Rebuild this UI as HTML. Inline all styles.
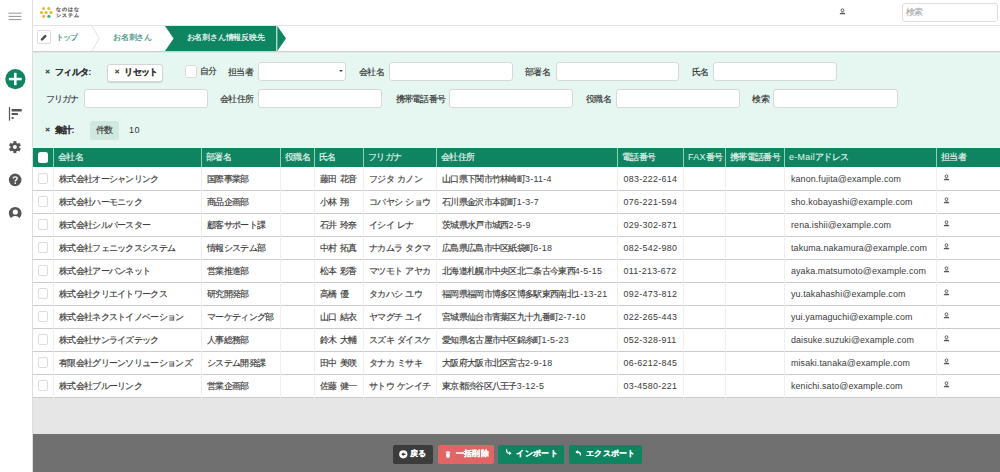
<!DOCTYPE html>
<html><head><meta charset="utf-8">
<style>
*{box-sizing:border-box;margin:0;padding:0}
html,body{width:1000px;height:472px;overflow:hidden;background:#fff;font-family:"Liberation Sans",sans-serif;color:#333;font-size:9px;-webkit-text-stroke:0.15px currentColor;letter-spacing:-.7px}
.abs{position:absolute}
#side{position:absolute;left:0;top:0;width:33px;height:472px;background:#fff;border-right:1px solid #ddd}
#hdr{position:absolute;left:33px;top:0;width:967px;height:26px;background:#fff;border-bottom:1px solid #e3e3e3}
#bc{position:absolute;left:33px;top:26px;width:967px;height:26px;background:#fff;border-bottom:1px solid #cfcfcf;box-shadow:0 1px 0 #dfe9e6}
#flt{position:absolute;left:33px;top:53px;width:967px;height:95px;background:#e6f7f1}
#tbl{position:absolute;left:33px;top:148px;width:967px}
#gray{position:absolute;left:33px;top:398px;width:967px;height:36px;background:#e6e6e6}
#ftr{position:absolute;left:33px;top:434px;width:967px;height:38px;background:#707070}
.lbl{position:absolute;line-height:12px;white-space:nowrap}
.inp{position:absolute;height:18px;width:124px;background:#fff;border:1px solid #d8d8d8;border-radius:3px}
.th{position:absolute;top:2.6px;line-height:12px;color:#e8f7f1;white-space:nowrap}
.td{position:absolute;line-height:12px;color:#3a3a3a;word-spacing:1.2px;white-space:nowrap}
.n{font-size:8.9px;letter-spacing:.3px;-webkit-text-stroke:0}
.e{font-size:8.9px;letter-spacing:.12px;-webkit-text-stroke:0}

.b{font-weight:bold;-webkit-text-stroke:0.05px currentColor}
.btn{position:absolute;height:19px;border-radius:2px;color:#fff;font-weight:bold;line-height:19px;white-space:nowrap}
</style></head><body>
<svg width="0" height="0" style="position:absolute"><defs><g id="uic"><circle cx="3.5" cy="2.2" r="1.4" fill="none" stroke="#555" stroke-width="0.95"/><path d="M0.7 6.2 L1 5.3 Q1.5 4.4 3.5 4.4 Q5.5 4.4 6 5.3 L6.3 6.2 Z" fill="#555"/></g></defs></svg>
<div id="side">
<svg class="abs" style="left:0;top:0" width="32" height="240" viewBox="0 0 32 240">
<g stroke="#979797" stroke-width="1.05"><line x1="8.5" y1="13.2" x2="21.4" y2="13.2"/><line x1="8.5" y1="16.4" x2="21.4" y2="16.4"/><line x1="8.5" y1="19.6" x2="21.4" y2="19.6"/></g>
<circle cx="15.4" cy="79.1" r="10.1" fill="#0e8461"/>
<rect x="14" y="72.8" width="2.6" height="12.4" fill="#fff"/><rect x="8.9" y="77.8" width="12.8" height="2.5" fill="#fff"/>
<g fill="#555"><rect x="8.9" y="107.1" width="1.2" height="13.5"/><rect x="11.6" y="109.1" width="10.2" height="2.3" rx="0.4"/><rect x="11.6" y="113.1" width="6.4" height="2" rx="0.4"/><rect x="11.6" y="117" width="2.1" height="2" rx="0.4"/></g>
<g transform="translate(14.9,147.1)" fill="#555">
<circle r="4.4"/>
<g id="tooth"><rect x="-1.5" y="-6" width="3" height="3"/></g>
<use href="#tooth" transform="rotate(60)"/><use href="#tooth" transform="rotate(120)"/><use href="#tooth" transform="rotate(180)"/><use href="#tooth" transform="rotate(240)"/><use href="#tooth" transform="rotate(300)"/>
<circle r="2" fill="#fff"/>
</g>
<circle cx="15.15" cy="179.9" r="6.3" fill="#555"/>
<path d="M13.3 178.6 Q13.3 176.9 15.2 176.9 Q17.1 176.9 17.1 178.5 Q17.1 179.5 16 180.2 Q15.2 180.7 15.2 181.6" fill="none" stroke="#fff" stroke-width="1.4"/>
<circle cx="15.2" cy="183.2" r="0.85" fill="#fff"/>
<circle cx="15.2" cy="213.2" r="6.3" fill="#555"/>
<circle cx="15.3" cy="212" r="2.6" fill="#fff"/>
<path d="M10.2 219.8 Q11.5 215.9 15.2 215.9 Q18.9 215.9 20.2 219.8 L20.5 221 L10 221 Z" fill="#fff"/>
</svg>
</div>
<div id="hdr">
<svg class="abs" style="left:0;top:0" width="60" height="24" viewBox="33 0 60 24">
<g fill="#e9b735"><circle cx="43.5" cy="8.5" r="1.6" fill="#dcc23a"/><circle cx="48.75" cy="8.5" r="1.6" fill="#dcc23a"/><circle cx="41.5" cy="12.5" r="1.6"/><circle cx="46.1" cy="12.5" r="1.6"/><circle cx="51" cy="12.5" r="1.6"/><circle cx="43.75" cy="16.3" r="1.6"/><circle cx="48.9" cy="16.3" r="1.6" fill="#3fae8e"/></g>
</svg>
<div class="lbl" style="left:22.5px;top:6px;font-size:5px;line-height:6px;letter-spacing:1.1px;color:#6a6a6a;-webkit-text-stroke:.35px #6a6a6a">なのはな<br>システム</div>
<svg class="abs" style="left:805.5px;top:8.4px" width="8" height="8" viewBox="0 0 8 8"><use href="#uic"/></svg>
<div class="inp" style="left:869px;top:3px;width:96px;height:19px;border-color:#ddd"></div>
<div class="lbl" style="left:873px;top:5.8px;color:#a8a8a8;-webkit-text-stroke:.1px #a8a8a8">検索</div>
</div>
<div id="bc">
<div class="abs" style="left:4.4px;top:4.2px;width:13.4px;height:13.4px;border:1px solid #dcdcdc;border-radius:2px;background:#fff"></div>
<svg class="abs" style="left:6px;top:6px" width="11" height="11" viewBox="0 0 11 11"><path d="M3.0 7.3 L6.3 4.1" stroke="#4a4a4a" stroke-width="2.5" stroke-linecap="round"/></svg>
<div class="lbl" style="left:22.6px;top:6.4px;font-size:7.8px;letter-spacing:-.8px;color:#3a8a7a">トップ</div>
<svg class="abs" style="left:0;top:-1px" width="967" height="28" viewBox="33 24 967 28">
<path d="M92 25 L99.3 37.3 L92 50" fill="none" stroke="#dcdcdc" stroke-width="0.9"/>
<path d="M165 25 L276 25 L276 50 L165 50 L173.6 37.5 Z" fill="#0e8461"/>
<rect x="276" y="25" width="1.3" height="25" fill="#a6e0cc"/><path d="M277.3 25 L286 37.5 L277.3 50 Z" fill="#0e8461"/>
</svg>
<div class="lbl" style="left:80px;top:6.3px;font-size:7.8px;letter-spacing:-.2px;color:#2f8878">お名刺さん</div>
<div class="lbl" style="left:153.5px;top:5.5px;font-size:7.8px;letter-spacing:-.2px;color:#fff">お名刺さん情報反映先</div>
</div>
<div id="flt">
<div class="lbl" style="left:12.3px;top:13.3px;font-weight:bold;font-size:8px;-webkit-text-stroke:.2px">×</div>
<div class="lbl" style="left:22.0px;top:13.3px;font-weight:bold;-webkit-text-stroke:.1px">フィルタ:</div>
<div class="inp" style="left:74.0px;top:10.6px;width:56.0px;height:18.0px;border-color:#d4d4d4;box-shadow:0 1px 1px rgba(0,0,0,.12)"></div>
<div class="lbl" style="left:81.8px;top:13.3px;font-weight:bold;font-size:8px;-webkit-text-stroke:.2px">×</div>
<div class="lbl" style="left:91.4px;top:13.3px;font-weight:bold;-webkit-text-stroke:.1px">リセット</div>
<div class="inp" style="left:152.0px;top:12.3px;width:12.2px;height:12.3px;border-color:#dadada;border-radius:2.5px"></div>
<div class="lbl" style="left:167.0px;top:11.9px;">自分</div>
<div class="lbl" style="left:195.0px;top:13.3px;">担当者</div>
<div class="inp" style="left:225.0px;top:9.3px;width:88.4px;height:19.2px;"></div>
<div class="abs" style="left:305.9px;top:16.6px;width:0;height:0;border-left:2.2px solid transparent;border-right:2.2px solid transparent;border-top:2.6px solid #444"></div>
<div class="lbl" style="left:326.0px;top:13.3px;">会社名</div>
<div class="inp" style="left:355.6px;top:9.3px;width:124.4px;height:19.2px;"></div>
<div class="lbl" style="left:492.0px;top:13.3px;">部署名</div>
<div class="inp" style="left:522.6px;top:9.3px;width:123.8px;height:19.2px;"></div>
<div class="lbl" style="left:658.6px;top:13.3px;">氏名</div>
<div class="inp" style="left:680.0px;top:9.3px;width:124.4px;height:19.2px;"></div>
<div class="lbl" style="left:12.6px;top:39.5px;">フリガナ</div>
<div class="inp" style="left:50.6px;top:36.2px;width:124.0px;height:18.8px;"></div>
<div class="lbl" style="left:187.0px;top:39.5px;">会社住所</div>
<div class="inp" style="left:225.0px;top:36.2px;width:124.0px;height:18.8px;"></div>
<div class="lbl" style="left:362.6px;top:39.5px;">携帯電話番号</div>
<div class="inp" style="left:416.2px;top:36.2px;width:123.8px;height:18.8px;"></div>
<div class="lbl" style="left:553.0px;top:39.5px;">役職名</div>
<div class="inp" style="left:582.6px;top:36.2px;width:124.0px;height:18.8px;"></div>
<div class="lbl" style="left:719.4px;top:39.5px;">検索</div>
<div class="inp" style="left:740.4px;top:36.2px;width:124.2px;height:18.8px;"></div>
<div class="lbl" style="left:12.3px;top:71.0px;font-weight:bold;font-size:8px;-webkit-text-stroke:.2px">×</div>
<div class="lbl" style="left:22.0px;top:71.0px;font-weight:bold;-webkit-text-stroke:.1px">集計:</div>
<div class="abs" style="left:57.2px;top:68.0px;width:29px;height:19px;background:#cfe9e0;border-radius:2px"></div>
<div class="lbl" style="left:63.2px;top:71.0px;">件数</div>
<div class="lbl" style="left:96.0px;top:71.0px;font-size:9px;letter-spacing:.4px;-webkit-text-stroke:0;color:#333">10</div>
</div>
<div id="tbl">
<div class="abs" style="left:0;top:0;width:967px;height:19px;background:#0e8461"></div>
<div class="abs" style="left:20px;top:0;width:1px;height:19px;background:#8cd2b9"></div>
<div class="abs" style="left:168px;top:0;width:1px;height:19px;background:#8cd2b9"></div>
<div class="abs" style="left:247px;top:0;width:1px;height:19px;background:#8cd2b9"></div>
<div class="abs" style="left:281px;top:0;width:1px;height:19px;background:#8cd2b9"></div>
<div class="abs" style="left:330px;top:0;width:1px;height:19px;background:#8cd2b9"></div>
<div class="abs" style="left:403px;top:0;width:1px;height:19px;background:#8cd2b9"></div>
<div class="abs" style="left:584px;top:0;width:1px;height:19px;background:#8cd2b9"></div>
<div class="abs" style="left:650px;top:0;width:1px;height:19px;background:#8cd2b9"></div>
<div class="abs" style="left:692px;top:0;width:1px;height:19px;background:#8cd2b9"></div>
<div class="abs" style="left:751px;top:0;width:1px;height:19px;background:#8cd2b9"></div>
<div class="abs" style="left:903px;top:0;width:1px;height:19px;background:#8cd2b9"></div>
<div class="abs" style="left:4.7px;top:4.3px;width:10.4px;height:10.5px;background:#fff;border-radius:2.5px"></div>
<div class="th" style="left:25px">会社名</div>
<div class="th" style="left:173px">部署名</div>
<div class="th" style="left:252px">役職名</div>
<div class="th" style="left:286px">氏名</div>
<div class="th" style="left:335px">フリガナ</div>
<div class="th" style="left:408px">会社住所</div>
<div class="th" style="left:589px">電話番号</div>
<div class="th" style="left:655px"><span class="n">FAX</span>番号</div>
<div class="th" style="left:697px">携帯電話番号</div>
<div class="th" style="left:756px"><span class="n">e-Mail</span>アドレス</div>
<div class="th" style="left:908px">担当者</div>
<div class="abs" style="left:0;top:42px;width:967px;height:1px;background:#cbcbcb"></div>
<div class="abs" style="left:4.6px;top:25.3px;width:10.8px;height:10.8px;border:1px solid #dcdcdc;border-radius:2px;background:#fff"></div>
<div class="td" style="left:26px;top:24.7px">株式会社オーシャンリンク</div>
<div class="td" style="left:174px;top:24.7px">国際事業部</div>
<div class="td" style="left:287px;top:24.7px">藤田 花音</div>
<div class="td" style="left:336px;top:24.7px">フジタ カノン</div>
<div class="td" style="left:409px;top:24.7px">山口県下関市竹林崎町<span class="n">3-11-4</span></div>
<div class="td" style="left:590.5px;top:24.7px"><span class="n">083-222-614</span></div>
<div class="td" style="left:758.0px;top:24.7px"><span class="e">kanon.fujita@example.com</span></div>
<svg class="abs" style="left:910px;top:26.0px" width="8" height="8" viewBox="0 0 8 8"><use href="#uic"/></svg>
<div class="abs" style="left:0;top:65px;width:967px;height:1px;background:#cbcbcb"></div>
<div class="abs" style="left:4.6px;top:48.3px;width:10.8px;height:10.8px;border:1px solid #dcdcdc;border-radius:2px;background:#fff"></div>
<div class="td" style="left:26px;top:47.7px">株式会社ハーモニック</div>
<div class="td" style="left:174px;top:47.7px">商品企画部</div>
<div class="td" style="left:287px;top:47.7px">小林 翔</div>
<div class="td" style="left:336px;top:47.7px">コバヤシ ショウ</div>
<div class="td" style="left:409px;top:47.7px">石川県金沢市本節町<span class="n">1-3-7</span></div>
<div class="td" style="left:590.5px;top:47.7px"><span class="n">076-221-594</span></div>
<div class="td" style="left:758.0px;top:47.7px"><span class="e">sho.kobayashi@example.com</span></div>
<svg class="abs" style="left:910px;top:49.0px" width="8" height="8" viewBox="0 0 8 8"><use href="#uic"/></svg>
<div class="abs" style="left:0;top:88px;width:967px;height:1px;background:#cbcbcb"></div>
<div class="abs" style="left:4.6px;top:71.3px;width:10.8px;height:10.8px;border:1px solid #dcdcdc;border-radius:2px;background:#fff"></div>
<div class="td" style="left:26px;top:70.7px">株式会社シルバースター</div>
<div class="td" style="left:174px;top:70.7px">顧客サポート課</div>
<div class="td" style="left:287px;top:70.7px">石井 玲奈</div>
<div class="td" style="left:336px;top:70.7px">イシイ レナ</div>
<div class="td" style="left:409px;top:70.7px">茨城県水戸市城西<span class="n">2-5-9</span></div>
<div class="td" style="left:590.5px;top:70.7px"><span class="n">029-302-871</span></div>
<div class="td" style="left:758.0px;top:70.7px"><span class="e">rena.ishii@example.com</span></div>
<svg class="abs" style="left:910px;top:72.0px" width="8" height="8" viewBox="0 0 8 8"><use href="#uic"/></svg>
<div class="abs" style="left:0;top:111px;width:967px;height:1px;background:#cbcbcb"></div>
<div class="abs" style="left:4.6px;top:94.3px;width:10.8px;height:10.8px;border:1px solid #dcdcdc;border-radius:2px;background:#fff"></div>
<div class="td" style="left:26px;top:93.7px">株式会社フェニックスシステム</div>
<div class="td" style="left:174px;top:93.7px">情報システム部</div>
<div class="td" style="left:287px;top:93.7px">中村 拓真</div>
<div class="td" style="left:336px;top:93.7px">ナカムラ タクマ</div>
<div class="td" style="left:409px;top:93.7px">広島県広島市中区紙袋町<span class="n">6-18</span></div>
<div class="td" style="left:590.5px;top:93.7px"><span class="n">082-542-980</span></div>
<div class="td" style="left:758.0px;top:93.7px"><span class="e">takuma.nakamura@example.com</span></div>
<svg class="abs" style="left:910px;top:95.0px" width="8" height="8" viewBox="0 0 8 8"><use href="#uic"/></svg>
<div class="abs" style="left:0;top:134px;width:967px;height:1px;background:#cbcbcb"></div>
<div class="abs" style="left:4.6px;top:117.3px;width:10.8px;height:10.8px;border:1px solid #dcdcdc;border-radius:2px;background:#fff"></div>
<div class="td" style="left:26px;top:116.7px">株式会社アーバンネット</div>
<div class="td" style="left:174px;top:116.7px">営業推進部</div>
<div class="td" style="left:287px;top:116.7px">松本 彩香</div>
<div class="td" style="left:336px;top:116.7px">マツモト アヤカ</div>
<div class="td" style="left:409px;top:116.7px">北海道札幌市中央区北二条古今東西<span class="n">4-5-15</span></div>
<div class="td" style="left:590.5px;top:116.7px"><span class="n">011-213-672</span></div>
<div class="td" style="left:758.0px;top:116.7px"><span class="e">ayaka.matsumoto@example.com</span></div>
<svg class="abs" style="left:910px;top:118.0px" width="8" height="8" viewBox="0 0 8 8"><use href="#uic"/></svg>
<div class="abs" style="left:0;top:157px;width:967px;height:1px;background:#cbcbcb"></div>
<div class="abs" style="left:4.6px;top:140.3px;width:10.8px;height:10.8px;border:1px solid #dcdcdc;border-radius:2px;background:#fff"></div>
<div class="td" style="left:26px;top:139.7px">株式会社クリエイトワークス</div>
<div class="td" style="left:174px;top:139.7px">研究開発部</div>
<div class="td" style="left:287px;top:139.7px">高橋 優</div>
<div class="td" style="left:336px;top:139.7px">タカハシ ユウ</div>
<div class="td" style="left:409px;top:139.7px">福岡県福岡市博多区博多駅東西南北<span class="n">1-13-21</span></div>
<div class="td" style="left:590.5px;top:139.7px"><span class="n">092-473-812</span></div>
<div class="td" style="left:758.0px;top:139.7px"><span class="e">yu.takahashi@example.com</span></div>
<svg class="abs" style="left:910px;top:141.0px" width="8" height="8" viewBox="0 0 8 8"><use href="#uic"/></svg>
<div class="abs" style="left:0;top:180px;width:967px;height:1px;background:#cbcbcb"></div>
<div class="abs" style="left:4.6px;top:163.3px;width:10.8px;height:10.8px;border:1px solid #dcdcdc;border-radius:2px;background:#fff"></div>
<div class="td" style="left:26px;top:162.7px">株式会社ネクストイノベーション</div>
<div class="td" style="left:174px;top:162.7px">マーケティング部</div>
<div class="td" style="left:287px;top:162.7px">山口 結衣</div>
<div class="td" style="left:336px;top:162.7px">ヤマグチ ユイ</div>
<div class="td" style="left:409px;top:162.7px">宮城県仙台市青葉区九十九番町<span class="n">2-7-10</span></div>
<div class="td" style="left:590.5px;top:162.7px"><span class="n">022-265-443</span></div>
<div class="td" style="left:758.0px;top:162.7px"><span class="e">yui.yamaguchi@example.com</span></div>
<svg class="abs" style="left:910px;top:164.0px" width="8" height="8" viewBox="0 0 8 8"><use href="#uic"/></svg>
<div class="abs" style="left:0;top:203px;width:967px;height:1px;background:#cbcbcb"></div>
<div class="abs" style="left:4.6px;top:186.3px;width:10.8px;height:10.8px;border:1px solid #dcdcdc;border-radius:2px;background:#fff"></div>
<div class="td" style="left:26px;top:185.7px">株式会社サンライズテック</div>
<div class="td" style="left:174px;top:185.7px">人事総務部</div>
<div class="td" style="left:287px;top:185.7px">鈴木 大輔</div>
<div class="td" style="left:336px;top:185.7px">スズキ ダイスケ</div>
<div class="td" style="left:409px;top:185.7px">愛知県名古屋市中区錦糸町<span class="n">1-5-23</span></div>
<div class="td" style="left:590.5px;top:185.7px"><span class="n">052-328-911</span></div>
<div class="td" style="left:758.0px;top:185.7px"><span class="e">daisuke.suzuki@example.com</span></div>
<svg class="abs" style="left:910px;top:187.0px" width="8" height="8" viewBox="0 0 8 8"><use href="#uic"/></svg>
<div class="abs" style="left:0;top:226px;width:967px;height:1px;background:#cbcbcb"></div>
<div class="abs" style="left:4.6px;top:209.3px;width:10.8px;height:10.8px;border:1px solid #dcdcdc;border-radius:2px;background:#fff"></div>
<div class="td" style="left:26px;top:208.7px">有限会社グリーンソリューションズ</div>
<div class="td" style="left:174px;top:208.7px">システム開発課</div>
<div class="td" style="left:287px;top:208.7px">田中 美咲</div>
<div class="td" style="left:336px;top:208.7px">タナカ ミサキ</div>
<div class="td" style="left:409px;top:208.7px">大阪府大阪市北区宮古<span class="n">2-9-18</span></div>
<div class="td" style="left:590.5px;top:208.7px"><span class="n">06-6212-845</span></div>
<div class="td" style="left:758.0px;top:208.7px"><span class="e">misaki.tanaka@example.com</span></div>
<svg class="abs" style="left:910px;top:210.0px" width="8" height="8" viewBox="0 0 8 8"><use href="#uic"/></svg>
<div class="abs" style="left:0;top:249px;width:967px;height:1px;background:#cbcbcb"></div>
<div class="abs" style="left:4.6px;top:232.3px;width:10.8px;height:10.8px;border:1px solid #dcdcdc;border-radius:2px;background:#fff"></div>
<div class="td" style="left:26px;top:231.7px">株式会社ブルーリンク</div>
<div class="td" style="left:174px;top:231.7px">営業企画部</div>
<div class="td" style="left:287px;top:231.7px">佐藤 健一</div>
<div class="td" style="left:336px;top:231.7px">サトウ ケンイチ</div>
<div class="td" style="left:409px;top:231.7px">東京都渋谷区八王子<span class="n">3-12-5</span></div>
<div class="td" style="left:590.5px;top:231.7px"><span class="n">03-4580-221</span></div>
<div class="td" style="left:758.0px;top:231.7px"><span class="e">kenichi.sato@example.com</span></div>
<svg class="abs" style="left:910px;top:233.0px" width="8" height="8" viewBox="0 0 8 8"><use href="#uic"/></svg>
<div class="abs" style="left:20px;top:19px;width:1px;height:231px;background:#efefef"></div>
<div class="abs" style="left:168px;top:19px;width:1px;height:231px;background:#efefef"></div>
<div class="abs" style="left:247px;top:19px;width:1px;height:231px;background:#efefef"></div>
<div class="abs" style="left:281px;top:19px;width:1px;height:231px;background:#efefef"></div>
<div class="abs" style="left:330px;top:19px;width:1px;height:231px;background:#efefef"></div>
<div class="abs" style="left:403px;top:19px;width:1px;height:231px;background:#efefef"></div>
<div class="abs" style="left:584px;top:19px;width:1px;height:231px;background:#efefef"></div>
<div class="abs" style="left:650px;top:19px;width:1px;height:231px;background:#efefef"></div>
<div class="abs" style="left:692px;top:19px;width:1px;height:231px;background:#efefef"></div>
<div class="abs" style="left:751px;top:19px;width:1px;height:231px;background:#efefef"></div>
<div class="abs" style="left:903px;top:19px;width:1px;height:231px;background:#efefef"></div>
</div>
<div id="gray"></div>
<div id="ftr">
<div class="btn" style="left:360.4px;top:11.0px;width:39.6px;background:#3c3c3c"></div><svg class="abs" style="left:365.9px;top:15.6px" width="9" height="9" viewBox="0 0 9 9"><circle cx="4.3" cy="4.3" r="4.1" fill="#fff"/><path d="M2.2 4.3 L4.6 2.3 L4.6 3.5 L6.5 3.5 L6.5 5.1 L4.6 5.1 L4.6 6.3 Z" fill="#3d3d3d"/></svg><div class="lbl" style="left:377.0px;top:13.1px;color:#fff;font-weight:bold;-webkit-text-stroke:.1px;font-size:8.3px;letter-spacing:.3px">戻る</div>
<div class="btn" style="left:404.8px;top:11.0px;width:55.8px;background:#e26565"></div><svg class="abs" style="left:412px;top:16.5px" width="7" height="8" viewBox="0 0 7 8"><rect x="0.6" y="0.8" width="4.8" height="1" fill="#fff"/><rect x="2.2" y="0.2" width="1.6" height="0.8" fill="#fff"/><path d="M1.1 2.3 L4.9 2.3 L4.6 6.8 L1.4 6.8 Z" fill="#fff"/></svg><div class="lbl" style="left:422.8px;top:13.1px;color:#fff;font-weight:bold;-webkit-text-stroke:.1px;font-size:8.3px;letter-spacing:.3px">一括削除</div>
<div class="btn" style="left:465.0px;top:11.0px;width:66.0px;background:#0e8461"></div><svg class="abs" style="left:472px;top:15.3px" width="8" height="8" viewBox="0 0 8 8"><path d="M1.6 0.8 Q1.4 4.2 4.4 4.2" fill="none" stroke="#fff" stroke-width="1.35" stroke-linecap="round"/><path d="M4.1 2.2 L6.6 4.2 L4.1 6.2 Z" fill="#fff"/></svg><div class="lbl" style="left:483.4px;top:13.1px;color:#fff;font-weight:bold;-webkit-text-stroke:.1px;font-size:8.3px;letter-spacing:.3px">インポート</div>
<div class="btn" style="left:536.2px;top:11.0px;width:72.5px;background:#0e8461"></div><svg class="abs" style="left:541.9px;top:15.3px" width="8" height="8" viewBox="0 0 8 8"><path d="M0.4 3 L2.7 1.1 L2.7 4.9 Z" fill="#fff"/><path d="M2.4 3 Q5.5 3 5.5 5.9" fill="none" stroke="#fff" stroke-width="1.35" stroke-linecap="round"/></svg><div class="lbl" style="left:553.0px;top:13.1px;color:#fff;font-weight:bold;-webkit-text-stroke:.1px;font-size:8.3px;letter-spacing:.3px">エクスポート</div>
</div>
</body></html>
